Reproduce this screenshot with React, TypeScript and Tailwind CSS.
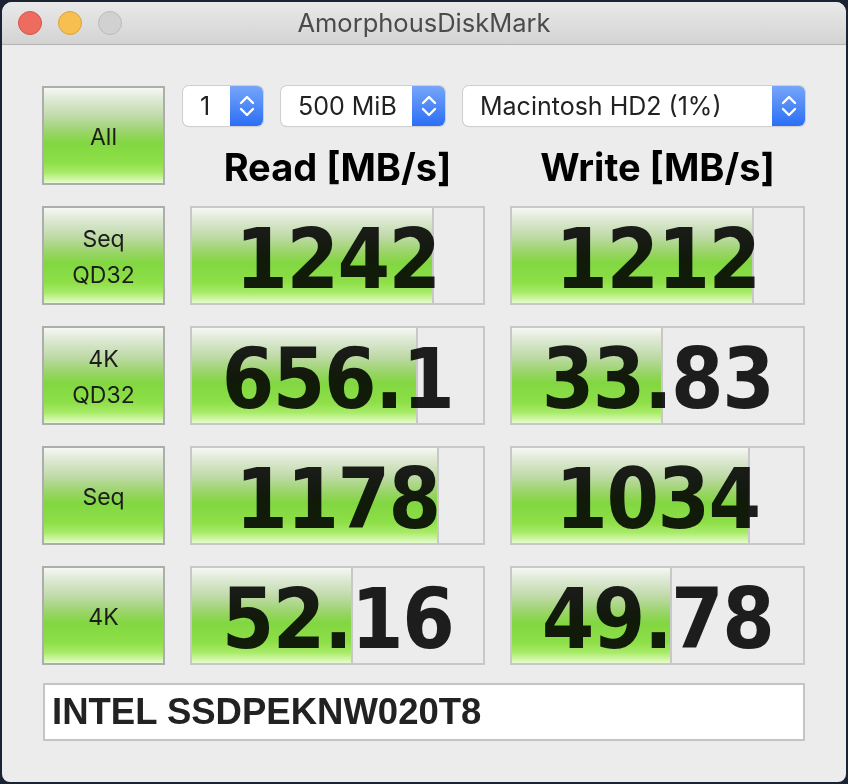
import React from 'react';

const green =
  'bg-[linear-gradient(to_bottom,#f5f8f3_0%,#dee9d5_12%,#bfdaa8_30%,#98d466_47%,#82d741_58%,#8ddf47_78%,#a9eb69_89%,#e6fccd_100%)]';

const Chevrons: React.FC = () => (
  <svg width="18" height="26" viewBox="0 0 18 26" fill="none" stroke="white" strokeWidth="2.4" strokeLinecap="round" strokeLinejoin="round">
    <path d="M3 10 L9 4 L15 10" />
    <path d="M3 16 L9 22 L15 16" />
  </svg>
);

interface SelectProps {
  label: string;
  width: string;
}

const Select: React.FC<SelectProps> = ({ label, width }) => (
  <div className={`${width} h-[40px] flex rounded-[6px] bg-white shadow-[0_0_0_1px_#cfcfcf,0_1px_1px_rgba(0,0,0,0.12)] overflow-hidden`}>
    <div className="flex-1 flex items-center pl-[17px] text-[25px] text-[#222] leading-none">{label}</div>
    <div className="w-[33px] flex items-center justify-center bg-[linear-gradient(to_bottom,#76a6fa,#2b6ef5)]">
      <Chevrons />
    </div>
  </div>
);

const LabelButton: React.FC<{ lines: string[] }> = ({ lines }) => (
  <div className={`w-[123px] h-[99px] shrink-0 border-2 border-[#adadad] ${green} flex flex-col items-center justify-center pt-[2px] text-[23px] leading-[36px] text-[#1c1c1c]`}>
    {lines.map((l) => (
      <span key={l}>{l}</span>
    ))}
  </div>
);

const BarCell: React.FC<{ value: string; fill: number }> = ({ value, fill }) => (
  <div className="relative w-[295px] h-[99px] shrink-0 border-2 border-[#c8c8c8] bg-[#ececec]">
    <div className={`absolute left-0 top-0 bottom-0 border-r-2 border-[#c8c8c8] ${green}`} style={{ width: fill }} />
    <div
      className="absolute left-0 right-0 top-0 h-[95px] flex items-center justify-center pt-[8px] text-[84px] font-bold leading-[87px] text-[#1f1f1f] tracking-[-1.5px] mix-blend-multiply"
      style={{ fontFamily: '"DejaVu Sans Condensed", "DejaVu Sans", sans-serif', fontStretch: 'condensed' }}
    >
      {value}
    </div>
  </div>
);

const rows = [
  { label: ['Seq', 'QD32'], read: '1242', readFill: 242, write: '1212', writeFill: 242 },
  { label: ['4K', 'QD32'], read: '656.1', readFill: 226, write: '33.83', writeFill: 151 },
  { label: ['Seq'], read: '1178', readFill: 247, write: '1034', writeFill: 238 },
  { label: ['4K'], read: '52.16', readFill: 161, write: '49.78', writeFill: 160 },
];

export default function App() {
  return (
    <div className="w-[848px] h-[784px] bg-[#1b2232] p-[2px]" style={{ fontFamily: 'Inter, "Liberation Sans", sans-serif' }}>
      <div className="w-[844px] h-[780px] rounded-t-[10px] rounded-b-[8px] bg-[#ececec] overflow-hidden flex flex-col">
        {/* title bar */}
        <div className="relative h-[43px] shrink-0 bg-[linear-gradient(to_bottom,#e9e9e9,#d3d3d3)] border-b border-[#b3b3b3] flex items-center">
          <div className="flex gap-[16px] pl-[16px]">
            <span className="w-[24px] h-[24px] rounded-full bg-[#ee6b60] border border-[#d5544b]" />
            <span className="w-[24px] h-[24px] rounded-full bg-[#f6bf4f] border border-[#d9a23f]" />
            <span className="w-[24px] h-[24px] rounded-full bg-[#d1d1d1] border border-[#bababa]" />
          </div>
          <div className="absolute inset-0 flex items-center justify-center pt-[1px] text-[25.5px] text-[#4b4b4b]">AmorphousDiskMark</div>
        </div>

        <div className="flex flex-col pl-[40px] pt-[41px]">
          {/* top row */}
          <div className="flex h-[99px]">
            <LabelButton lines={['All']} />
            <div className="flex flex-col">
              <div className="flex gap-[18px] ml-[18px]">
                <Select label="1" width="w-[80px]" />
                <Select label="500 MiB" width="w-[164px]" />
                <Select label="Macintosh HD2 (1%)" width="w-[342px]" />
              </div>
              <div className="flex gap-[25px] ml-[25px] mt-[23px] text-[38px] font-bold text-black leading-[36px]">
                <div className="w-[295px] text-center">Read [MB/s]</div>
                <div className="w-[295px] text-center">Write [MB/s]</div>
              </div>
            </div>
          </div>

          {rows.map((r) => (
            <div key={r.label.join('')} className="flex gap-[25px] mt-[21px]">
              <LabelButton lines={r.label} />
              <BarCell value={r.read} fill={r.readFill} />
              <BarCell value={r.write} fill={r.writeFill} />
            </div>
          ))}

          <div
            className="mt-[18px] ml-[1px] w-[762px] h-[58px] bg-white border-2 border-[#c4c4c4] flex items-center pl-[7px] pt-[1px] text-[36.5px] font-bold text-[#222]"
            style={{ fontFamily: '"Liberation Sans", Arial, sans-serif' }}
          >
            INTEL SSDPEKNW020T8
          </div>
        </div>
      </div>
    </div>
  );
}
